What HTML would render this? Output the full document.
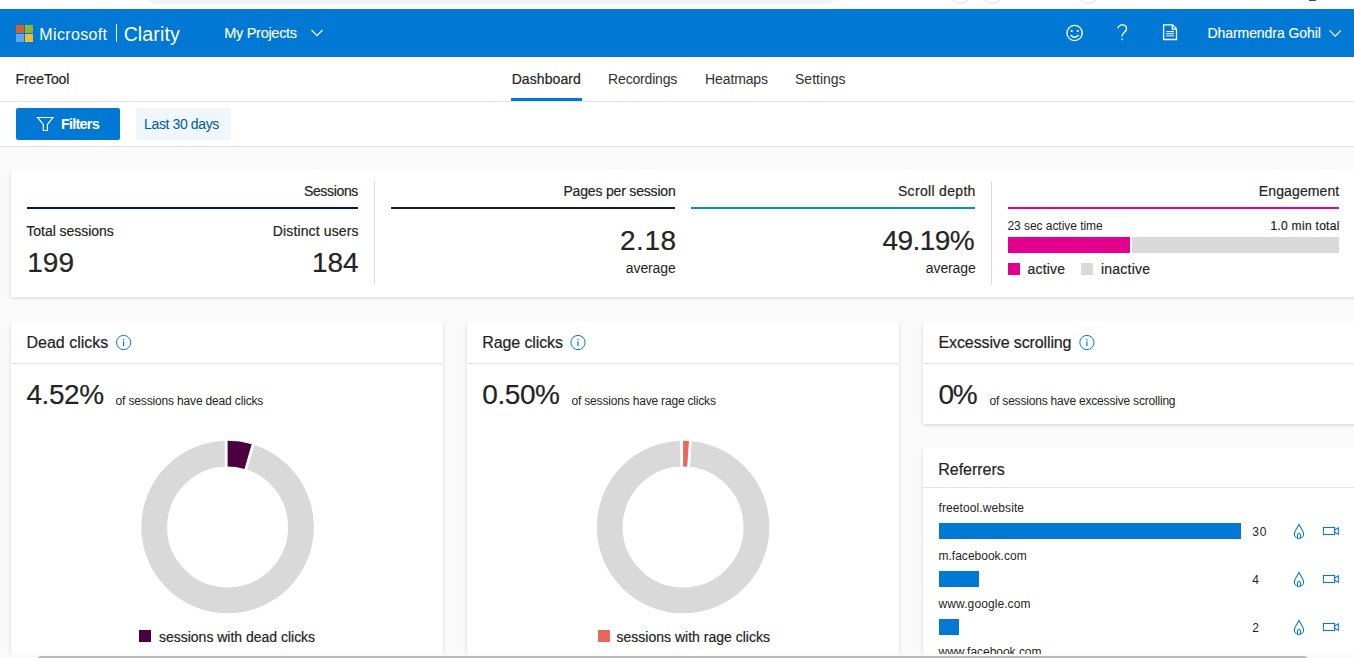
<!DOCTYPE html>
<html><head><meta charset="utf-8"><title>Microsoft Clarity</title>
<style>
html,body{margin:0;padding:0;overflow:hidden;width:1354px;height:658px}
body{background:#fafafa}
#p{width:1354px;height:658px;overflow:hidden;position:relative;background:#fafafa;font-family:"Liberation Sans",sans-serif}
.a{position:absolute}
.t{position:absolute;white-space:nowrap;line-height:1}
.card{position:absolute;background:#fff;box-shadow:0 1.6px 3.6px rgba(0,0,0,.132),0 .3px .9px rgba(0,0,0,.108)}
.hl{position:absolute;height:1px;background:#e4e4e4}
svg{position:absolute;left:0;top:0;overflow:visible}
</style></head><body><div id="p">

<div class="a" style="left:0;top:0;width:1354px;height:9px;background:#fff"></div>
<div class="a" style="left:143px;top:-24px;width:696px;height:28px;background:#f1f3f4;border-radius:14px"></div>
<div class="a" style="left:950px;top:-17px;width:19px;height:19px;border:1px solid #dcdcdc;border-radius:50%"></div>
<div class="a" style="left:982px;top:-17px;width:19px;height:19px;border:1px solid #dcdcdc;border-radius:50%"></div>
<div class="a" style="left:1078px;top:-17px;width:19px;height:19px;border:1px solid #dcdcdc;border-radius:50%"></div>
<div class="a" style="left:1309px;top:0;width:7px;height:1px;background:#3a4a7a"></div>
<div class="a" style="left:0;top:9px;width:1354px;height:48px;background:#0078d4"></div>
<div class="a" style="left:16px;top:25px;width:8px;height:8px;background:#dc5f2b"></div>
<div class="a" style="left:25px;top:25px;width:8px;height:8px;background:#8fb62e"></div>
<div class="a" style="left:16px;top:34px;width:8px;height:8px;background:#5ea6ec"></div>
<div class="a" style="left:25px;top:34px;width:8px;height:8px;background:#f2bd37"></div>
<div class="a" style="left:116px;top:24px;width:1px;height:17.5px;background:#fff"></div>
<div class="a" style="left:0;top:57px;width:1354px;height:89px;background:#fff"></div>
<div class="hl" style="left:0;top:101px;width:1354px"></div>
<div class="hl" style="left:0;top:146px;width:1354px;background:#e0e0e0"></div>
<div class="a" style="left:511px;top:98px;width:71px;height:3px;background:#0078d4"></div>
<div class="a" style="left:16px;top:108px;width:104px;height:32px;background:#0078d4;border-radius:2px"></div>
<div class="a" style="left:136px;top:108px;width:95px;height:32px;background:#eff6fc;border-radius:2px"></div>
<div class="card" style="left:11px;top:169px;width:1400px;height:128px"></div>
<div class="a" style="left:27px;top:207px;width:331px;height:2px;background:#000c8a"></div>
<div class="a" style="left:391px;top:207px;width:284px;height:2px;background:#201f1e"></div>
<div class="a" style="left:691px;top:207px;width:284px;height:2px;background:#0099a8"></div>
<div class="a" style="left:1008px;top:207px;width:331px;height:2px;background:#e3008c"></div>
<div class="a" style="left:374px;top:181px;width:1px;height:104px;background:#dcdcdc"></div>
<div class="a" style="left:991px;top:181px;width:1px;height:104px;background:#dcdcdc"></div>
<div class="a" style="left:1008px;top:237px;width:122px;height:16px;background:#e3008c"></div>
<div class="a" style="left:1132px;top:237px;width:207px;height:16px;background:#d9d9d9"></div>
<div class="a" style="left:1008px;top:263px;width:12px;height:12px;background:#e3008c"></div>
<div class="a" style="left:1081px;top:263px;width:12px;height:12px;background:#d9d9d9"></div>
<div class="card" style="left:11px;top:321px;width:432px;height:400px"></div>
<div class="card" style="left:467px;top:321px;width:432px;height:400px"></div>
<div class="card" style="left:923px;top:321px;width:500px;height:103px"></div>
<div class="card" style="left:923px;top:448px;width:500px;height:300px"></div>
<div class="hl" style="left:11px;top:363px;width:432px"></div>
<div class="hl" style="left:467px;top:363px;width:432px"></div>
<div class="hl" style="left:923px;top:363px;width:431px"></div>
<div class="hl" style="left:923px;top:487px;width:431px"></div>
<div class="a" style="left:139px;top:630px;width:12px;height:12px;background:#4b003f"></div>
<div class="a" style="left:597.5px;top:630px;width:12px;height:12px;background:#e8685a"></div>
<div class="a" style="left:939px;top:523px;width:302px;height:16px;background:#0078d4"></div>
<div class="a" style="left:939px;top:571px;width:40px;height:16px;background:#0078d4"></div>
<div class="a" style="left:939px;top:619px;width:20px;height:16px;background:#0078d4"></div>
<svg width="1354" height="658" viewBox="0 0 1354 658"><polyline points="311.5,30 317,35.7 322.5,30" fill="none" stroke="#fff" stroke-width="1.2"/><polyline points="1329.5,30.3 1335.2,36.2 1340.9,30.3" fill="none" stroke="#fff" stroke-width="1.2"/><g fill="none" stroke="#fff" stroke-width="1.4"><circle cx="1074.6" cy="33" r="7.6"/><path d="M1070.6,35 Q1074.6,39.6 1078.6,35"/></g><rect x="1070.8" y="30" width="1.8" height="2" fill="#fff"/><rect x="1076.8" y="30" width="1.8" height="2" fill="#fff"/><path d="M1117.8,28.2 C1118.6,25.6 1120.6,24.9 1122.3,24.9 C1124.8,24.9 1126.5,26.5 1126.5,28.7 C1126.5,32.4 1121.9,32.6 1121.9,36.6" fill="none" stroke="#fff" stroke-width="1.4"/><rect x="1121.2" y="38.6" width="1.5" height="1.6" fill="#fff"/><path d="M1163.6,24.9 H1172.6 L1176.5,28.8 V39.5 H1163.6 Z M1172.3,25.2 V29.1 H1176.2" fill="none" stroke="#fff" stroke-width="1.3"/><path d="M1166.2,31.6 H1174 M1166.2,33.7 H1174 M1166.2,35.8 H1174" fill="none" stroke="#fff" stroke-width="1"/><path d="M37.6,117.5 H53 L47.4,124.4 V130.5 H43.3 V124.4 Z" fill="none" stroke="#fff" stroke-width="1.2" stroke-linejoin="miter"/><g><circle cx="123.6" cy="342.5" r="7.1" fill="none" stroke="#0078d4" stroke-width="1"/><rect x="123.0" y="339" width="1.2" height="1.3" fill="#0078d4"/><rect x="123.0" y="341.3" width="1.2" height="4.8" fill="#0078d4"/></g><g><circle cx="578" cy="342.5" r="7.1" fill="none" stroke="#0078d4" stroke-width="1"/><rect x="577.4" y="339" width="1.2" height="1.3" fill="#0078d4"/><rect x="577.4" y="341.3" width="1.2" height="4.8" fill="#0078d4"/></g><g><circle cx="1086.9" cy="342.5" r="7.1" fill="none" stroke="#0078d4" stroke-width="1"/><rect x="1086.3000000000002" y="339" width="1.2" height="1.3" fill="#0078d4"/><rect x="1086.3000000000002" y="341.3" width="1.2" height="4.8" fill="#0078d4"/></g><circle cx="227.6" cy="527" r="73.4" fill="none" stroke="#d9d9d9" stroke-width="25.799999999999997"/><line x1="227.60" y1="467.50" x2="227.60" y2="439.70" stroke="#fff" stroke-width="5.6"/><line x1="244.20" y1="469.86" x2="251.96" y2="443.17" stroke="#fff" stroke-width="5.6"/><path d="M227.60,440.70 A86.3,86.3 0 0 1 251.68,444.13 L244.48,468.90 A60.5,60.5 0 0 0 227.60,466.50 Z" fill="#4b003f"/><circle cx="683.1" cy="527" r="73.4" fill="none" stroke="#d9d9d9" stroke-width="25.799999999999997"/><line x1="683.10" y1="467.50" x2="683.10" y2="439.70" stroke="#fff" stroke-width="5.6"/><line x1="687.15" y1="467.64" x2="689.04" y2="439.90" stroke="#fff" stroke-width="5.6"/><path d="M683.10,440.70 A86.3,86.3 0 0 1 688.97,440.90 L687.21,466.64 A60.5,60.5 0 0 0 683.10,466.50 Z" fill="#e8685a"/><g transform="translate(0,0)" fill="none" stroke="#0078d4" stroke-width="1.05"><path d="M1299,524.4 C1297.6,527.8 1294.4,531.2 1294.4,534 C1294.4,536.6 1296.4,538.5 1299,538.5 C1301.6,538.5 1303.6,536.6 1303.6,534 C1303.6,531.2 1300.4,527.8 1299,524.4 Z"/><path d="M1297.5,538.2 V535 A1.5,1.5 0 0 1 1300.5,535 V538.2"/><rect x="1323.4" y="527.5" width="11.2" height="7"/><path d="M1334.6,530 L1338.4,527.8 V534.4 L1334.6,532.2"/></g><g transform="translate(0,48)" fill="none" stroke="#0078d4" stroke-width="1.05"><path d="M1299,524.4 C1297.6,527.8 1294.4,531.2 1294.4,534 C1294.4,536.6 1296.4,538.5 1299,538.5 C1301.6,538.5 1303.6,536.6 1303.6,534 C1303.6,531.2 1300.4,527.8 1299,524.4 Z"/><path d="M1297.5,538.2 V535 A1.5,1.5 0 0 1 1300.5,535 V538.2"/><rect x="1323.4" y="527.5" width="11.2" height="7"/><path d="M1334.6,530 L1338.4,527.8 V534.4 L1334.6,532.2"/></g><g transform="translate(0,96)" fill="none" stroke="#0078d4" stroke-width="1.05"><path d="M1299,524.4 C1297.6,527.8 1294.4,531.2 1294.4,534 C1294.4,536.6 1296.4,538.5 1299,538.5 C1301.6,538.5 1303.6,536.6 1303.6,534 C1303.6,531.2 1300.4,527.8 1299,524.4 Z"/><path d="M1297.5,538.2 V535 A1.5,1.5 0 0 1 1300.5,535 V538.2"/><rect x="1323.4" y="527.5" width="11.2" height="7"/><path d="M1334.6,530 L1338.4,527.8 V534.4 L1334.6,532.2"/></g></svg>
<div class="t" style="left:39.33px;top:27.26px;font-size:16.0px;letter-spacing:0.354px;color:#ffffff;">Microsoft</div>
<div class="t" style="left:123.64px;top:24.79px;font-size:19.5px;letter-spacing:0.155px;color:#ffffff;">Clarity</div>
<div class="t" style="left:224.21px;top:26.23px;font-size:14.5px;letter-spacing:-0.283px;color:#ffffff;-webkit-text-stroke:0.12px currentColor;">My Projects</div>
<div class="t" style="left:1207.44px;top:26.15px;font-size:14.0px;letter-spacing:-0.06px;color:#ffffff;-webkit-text-stroke:0.12px currentColor;">Dharmendra Gohil</div>
<div class="t" style="left:15.57px;top:71.75px;font-size:14px;letter-spacing:-0.091px;color:#252423;-webkit-text-stroke:0.2px currentColor;">FreeTool</div>
<div class="t" style="left:511.67px;top:72.15px;font-size:14px;letter-spacing:0.095px;color:#252423;-webkit-text-stroke:0.2px currentColor;">Dashboard</div>
<div class="t" style="left:608.1px;top:72.15px;font-size:14px;letter-spacing:-0.181px;color:#323130;">Recordings</div>
<div class="t" style="left:705.11px;top:72.15px;font-size:14px;letter-spacing:-0.133px;color:#323130;">Heatmaps</div>
<div class="t" style="left:795.06px;top:72.15px;font-size:14px;letter-spacing:-0.018px;color:#323130;">Settings</div>
<div class="t" style="left:60.96px;top:116.93px;font-size:14.5px;letter-spacing:-0.786px;color:#ffffff;font-weight:700;">Filters</div>
<div class="t" style="left:144.12px;top:117.35px;font-size:14px;letter-spacing:-0.381px;color:#005a9e;">Last 30 days</div>
<div class="t" style="left:303.9px;top:184.15px;font-size:14px;letter-spacing:-0.333px;color:#252423;-webkit-text-stroke:0.2px currentColor;">Sessions</div>
<div class="t" style="left:26.37px;top:224.35px;font-size:14px;letter-spacing:-0.04px;color:#252423;-webkit-text-stroke:0.2px currentColor;">Total sessions</div>
<div class="t" style="left:272.79px;top:224.35px;font-size:14px;letter-spacing:0.138px;color:#252423;-webkit-text-stroke:0.2px currentColor;">Distinct users</div>
<div class="t" style="left:27.22px;top:249.2px;font-size:28.0px;letter-spacing:0.046px;color:#252423;-webkit-text-stroke:0.2px currentColor;">199</div>
<div class="t" style="left:311.98px;top:249.2px;font-size:28.0px;letter-spacing:-0.029px;color:#252423;-webkit-text-stroke:0.2px currentColor;">184</div>
<div class="t" style="left:563.39px;top:184.15px;font-size:14px;letter-spacing:-0.174px;color:#252423;-webkit-text-stroke:0.2px currentColor;">Pages per session</div>
<div class="t" style="left:619.97px;top:226.5px;font-size:28.0px;letter-spacing:0.544px;color:#252423;-webkit-text-stroke:0.2px currentColor;">2.18</div>
<div class="t" style="left:625.81px;top:261.25px;font-size:14px;letter-spacing:-0.103px;color:#252423;">average</div>
<div class="t" style="left:897.95px;top:184.15px;font-size:14px;letter-spacing:0.322px;color:#252423;-webkit-text-stroke:0.2px currentColor;">Scroll depth</div>
<div class="t" style="left:882.54px;top:226.6px;font-size:28.0px;letter-spacing:-0.589px;color:#252423;-webkit-text-stroke:0.2px currentColor;">49.19%</div>
<div class="t" style="left:925.81px;top:261.25px;font-size:14px;letter-spacing:-0.103px;color:#252423;">average</div>
<div class="t" style="left:1258.84px;top:184.15px;font-size:14px;letter-spacing:0.114px;color:#252423;-webkit-text-stroke:0.2px currentColor;">Engagement</div>
<div class="t" style="left:1007.47px;top:219.74px;font-size:12.0px;letter-spacing:-0.051px;color:#252423;">23 sec active time</div>
<div class="t" style="left:1270.39px;top:219.74px;font-size:12.0px;letter-spacing:0.304px;color:#252423;-webkit-text-stroke:0.2px currentColor;">1.0 min total</div>
<div class="t" style="left:1027.47px;top:262.15px;font-size:14px;letter-spacing:0.201px;color:#252423;-webkit-text-stroke:0.2px currentColor;">active</div>
<div class="t" style="left:1100.97px;top:262.15px;font-size:14px;letter-spacing:0.239px;color:#252423;-webkit-text-stroke:0.2px currentColor;">inactive</div>
<div class="t" style="left:26.47px;top:335.46px;font-size:16px;letter-spacing:-0.001px;color:#252423;-webkit-text-stroke:0.2px currentColor;">Dead clicks</div>
<div class="t" style="left:26.49px;top:381.2px;font-size:28.0px;letter-spacing:-0.433px;color:#252423;-webkit-text-stroke:0.2px currentColor;">4.52%</div>
<div class="t" style="left:115.61px;top:394.74px;font-size:12.0px;letter-spacing:-0.162px;color:#252423;">of sessions have dead clicks</div>
<div class="t" style="left:159.03px;top:629.55px;font-size:14px;letter-spacing:-0.013px;color:#252423;-webkit-text-stroke:0.2px currentColor;">sessions with dead clicks</div>
<div class="t" style="left:482.37px;top:335.46px;font-size:16px;letter-spacing:-0.121px;color:#252423;-webkit-text-stroke:0.2px currentColor;">Rage clicks</div>
<div class="t" style="left:482.36px;top:381.2px;font-size:28.0px;letter-spacing:-0.467px;color:#252423;-webkit-text-stroke:0.2px currentColor;">0.50%</div>
<div class="t" style="left:571.53px;top:394.74px;font-size:12.0px;letter-spacing:-0.185px;color:#252423;">of sessions have rage clicks</div>
<div class="t" style="left:616.55px;top:629.55px;font-size:14px;letter-spacing:0.006px;color:#252423;-webkit-text-stroke:0.2px currentColor;">sessions with rage clicks</div>
<div class="t" style="left:938.57px;top:335.46px;font-size:16px;letter-spacing:-0.123px;color:#252423;-webkit-text-stroke:0.2px currentColor;">Excessive scrolling</div>
<div class="t" style="left:938.56px;top:381.2px;font-size:28.0px;letter-spacing:-1.368px;color:#252423;-webkit-text-stroke:0.2px currentColor;">0%</div>
<div class="t" style="left:989.59px;top:394.74px;font-size:12.0px;letter-spacing:-0.194px;color:#252423;">of sessions have excessive scrolling</div>
<div class="t" style="left:938.27px;top:461.56px;font-size:16px;letter-spacing:-0.027px;color:#252423;-webkit-text-stroke:0.2px currentColor;">Referrers</div>
<div class="t" style="left:938.47px;top:501.74px;font-size:12.0px;letter-spacing:0.099px;color:#252423;">freetool.website</div>
<div class="t" style="left:1252.25px;top:525.84px;font-size:12.0px;letter-spacing:0.8px;color:#252423;">30</div>
<div class="t" style="left:938.5px;top:549.84px;font-size:12.0px;letter-spacing:0.008px;color:#252423;">m.facebook.com</div>
<div class="t" style="left:1252.23px;top:573.84px;font-size:12.0px;letter-spacing:0px;color:#252423;">4</div>
<div class="t" style="left:938.58px;top:597.84px;font-size:12.0px;letter-spacing:0.091px;color:#252423;">www.google.com</div>
<div class="t" style="left:1252.29px;top:621.84px;font-size:12.0px;letter-spacing:0px;color:#252423;">2</div>
<div class="t" style="left:938.59px;top:645.84px;font-size:12.0px;letter-spacing:-0.031px;color:#252423;">www.facebook.com</div>
<div class="a" style="left:0;top:654px;width:1354px;height:4px;background:#fafafa"></div>
<div class="a" style="left:37px;top:656px;width:1271px;height:10px;background:#bbbbb7;border-radius:4px"></div>
</div></body></html>
